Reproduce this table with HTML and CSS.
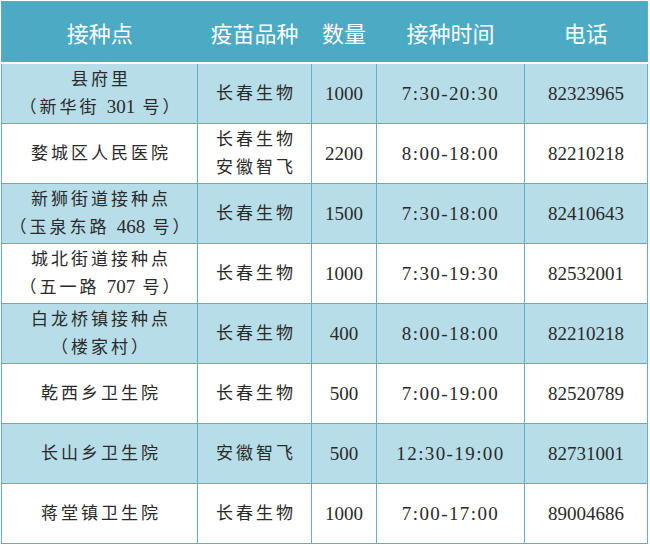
FILE: index.html
```html
<!DOCTYPE html>
<html lang="zh">
<head>
<meta charset="utf-8">
<link rel="stylesheet" href="styles.css">
</head>
<body>
<table class="sched">
  <colgroup>
    <col class="c1"><col class="c2"><col class="c3"><col class="c4"><col class="c5">
  </colgroup>
  <thead>
    <tr><th>接种点</th><th>疫苗品种</th><th>数量</th><th>接种时间</th><th>电话</th></tr>
  </thead>
  <tbody>
    <tr class="alt"><td class="zh">县府里<br>（新华街 <span class="n">301</span> 号）</td><td class="zh">长春生物</td><td class="num">1000</td><td class="time">7:30-20:30</td><td class="num">82323965</td></tr>
    <tr><td class="zh">婺城区人民医院</td><td class="zh">长春生物<br>安徽智飞</td><td class="num">2200</td><td class="time">8:00-18:00</td><td class="num">82210218</td></tr>
    <tr class="alt"><td class="zh">新狮街道接种点<br>（玉泉东路 <span class="n">468</span> 号）</td><td class="zh">长春生物</td><td class="num">1500</td><td class="time">7:30-18:00</td><td class="num">82410643</td></tr>
    <tr><td class="zh">城北街道接种点<br>（五一路 <span class="n">707</span> 号）</td><td class="zh">长春生物</td><td class="num">1000</td><td class="time">7:30-19:30</td><td class="num">82532001</td></tr>
    <tr class="alt"><td class="zh">白龙桥镇接种点<br>（楼家村）</td><td class="zh">长春生物</td><td class="num">400</td><td class="time">8:00-18:00</td><td class="num">82210218</td></tr>
    <tr><td class="zh">乾西乡卫生院</td><td class="zh">长春生物</td><td class="num">500</td><td class="time">7:00-19:00</td><td class="num">82520789</td></tr>
    <tr class="alt"><td class="zh">长山乡卫生院</td><td class="zh">安徽智飞</td><td class="num">500</td><td class="time">12:30-19:00</td><td class="num">82731001</td></tr>
    <tr><td class="zh">蒋堂镇卫生院</td><td class="zh">长春生物</td><td class="num">1000</td><td class="time">7:00-17:00</td><td class="num">89004686</td></tr>
  </tbody>
</table>
</body>
</html>
```
FILE: styles.css
```css
html, body {
  margin: 0;
  padding: 0;
  background: #ffffff;
}
body {
  padding: 1px 0 0 1px;
}
.sched {
  border-collapse: collapse;
  table-layout: fixed;
  width: 646px;
  font-family: "Liberation Serif", "Noto Sans CJK SC", serif;
  color: #2a2a2a;
  border: 1px solid #58aec6;
}
.c1 { width: 196px; }
.c2 { width: 114px; }
.c3 { width: 65px; }
.c4 { width: 148px; }
.c5 { width: 123px; }

.sched thead th {
  background: #4baac4;
  color: #ffffff;
  font-family: "Noto Sans CJK SC", "Noto Sans", sans-serif;
  font-weight: normal;
  font-size: 22px;
  height: 60px;
  padding: 0;
  border-bottom: 2px solid #ffffff;
  text-align: center;
  vertical-align: middle;
}
.sched td {
  height: 59px;
  padding: 0;
  border: 1px solid #5fb0c6;
  text-align: center;
  vertical-align: middle;
  font-size: 19px;
  line-height: 28px;
}
.sched tr.alt td {
  background: #b7dde8;
}
.sched td.zh {
  font-size: 17px;
  letter-spacing: 3px;
  padding-left: 3px;
}
.sched td.zh .n {
  font-size: 19px;
  line-height: 1;
  letter-spacing: 0;
}
.sched td.num {
  font-size: 19px;
}
.sched td.time {
  font-size: 19px;
  letter-spacing: 1.4px;
}
```
